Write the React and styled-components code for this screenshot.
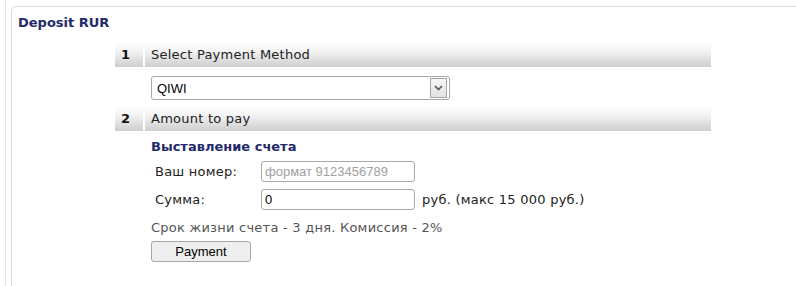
import React from 'react'
import styled, { createGlobalStyle } from 'styled-components'

const GlobalStyle = createGlobalStyle`
  html, body {
    margin: 0;
    padding: 0;
    background: #fff;
  }
  body {
    font-family: "DejaVu Sans", Verdana, sans-serif;
    font-size: 13px;
    letter-spacing: 0.24px;
    color: #222;
  }
`;

const Page = styled.div`
  margin-left: 5px;
  border-left: 1px solid #e6e6e6;
  padding-left: 5px;
  min-height: 286px;
  box-sizing: border-box;
  padding-top: 6px;
`;

const Box = styled.div`
  border-top: 1px solid #dcdcdc;
  border-left: 1px solid #dcdcdc;
  border-top-left-radius: 5px;
  min-height: 280px;
  box-sizing: border-box;
  padding: 8px 0 0 6px;
`;

const Title = styled.h2`
  margin: 0;
  font-size: 13px;
  font-weight: bold;
  color: #1f2a6b;
  line-height: 16px;
  letter-spacing: 0;
`;

const Steps = styled.div`
  margin-left: 97px;
  margin-top: 11px;
  width: 596px;
`;

const StepHead = styled.div`
  display: flex;
  gap: 2px;
  height: 25px;
`;

const headGradient = `
  background: linear-gradient(to bottom, #ffffff 0%, #f4f4f4 35%, #cecece 100%);
`;

const StepNum = styled.div`
  ${headGradient}
  width: 28px;
  padding-left: 6px;
  box-sizing: border-box;
  font-weight: bold;
  line-height: 25px;
  color: #111;
`;

const StepTitle = styled.div`
  ${headGradient}
  flex: 1;
  padding-left: 6px;
  line-height: 25px;
  color: #222;
`;

const StepBody = styled.div`
  padding: ${p => p.$pad || '0'};
  padding-left: 36px;
`;

const SelectWrap = styled.div`
  position: relative;
  width: 299px;
  height: 24px;
`;

const Select = styled.select`
  appearance: none;
  -webkit-appearance: none;
  width: 100%;
  height: 100%;
  border: 1px solid #a9a9a9;
  border-radius: 3px;
  background: #fff;
  font-family: "Liberation Sans", Arial, sans-serif;
  font-size: 13px;
  color: #000;
  padding: 0 0 0 5px;
  outline: none;
`;

const Arrow = styled.span`
  position: absolute;
  right: 3px;
  top: 2px;
  width: 15px;
  height: 18px;
  border: 1px solid #a6a6a6;
  background: linear-gradient(to bottom, #f6f6f6, #e2e2e2);
  display: flex;
  align-items: center;
  justify-content: center;
  pointer-events: none;
`;

const SubTitle = styled.div`
  font-weight: bold;
  color: #1f2a6b;
  line-height: 16px;
  margin-top: 8px;
  letter-spacing: 0;
`;

const FormGrid = styled.div`
  display: grid;
  grid-template-columns: 106px auto;
  row-gap: 7px;
  align-items: center;
  margin-top: 6px;
  padding-left: 4px;
`;

const Label = styled.label`
  color: #222;
`;

const FieldRow = styled.div`
  display: flex;
  align-items: center;
  gap: 7px;
`;

const Input = styled.input`
  width: 154px;
  height: 21px;
  box-sizing: border-box;
  border: 1px solid #a9a9a9;
  border-radius: 3px;
  font-family: "Liberation Sans", Arial, sans-serif;
  font-size: 13px;
  padding: 0 3px;
  color: #000;
  outline: none;
  &::placeholder {
    color: #a0a0a0;
  }
`;

const Note = styled.div`
  color: #555;
  margin-top: 10px;
  line-height: 16px;
`;

const Button = styled.button`
  display: block;
  margin-top: 5px;
  width: 100px;
  height: 21px;
  border: 1px solid #a6a6a6;
  border-radius: 3px;
  background: #efefef;
  font-family: "Liberation Sans", Arial, sans-serif;
  font-size: 13px;
  color: #000;
  padding: 0;
`;

export default function App() {
  return (
    <>
      <GlobalStyle />
      <Page>
        <Box>
          <Title>Deposit RUR</Title>
          <Steps>
            <StepHead>
              <StepNum>1</StepNum>
              <StepTitle>Select Payment Method</StepTitle>
            </StepHead>
            <StepBody $pad="9px 0 6px">
              <SelectWrap>
                <Select defaultValue="qiwi">
                  <option value="qiwi">QIWI</option>
                </Select>
                <Arrow>
                  <svg width="9" height="6" viewBox="0 0 9 6">
                    <path d="M1 1 L4.5 4.5 L8 1" fill="none" stroke="#555" strokeWidth="1.6" />
                  </svg>
                </Arrow>
              </SelectWrap>
            </StepBody>
            <StepHead>
              <StepNum>2</StepNum>
              <StepTitle>Amount to pay</StepTitle>
            </StepHead>
            <StepBody>
              <SubTitle>Выставление счета</SubTitle>
              <FormGrid>
                <Label>Ваш номер:</Label>
                <FieldRow>
                  <Input placeholder="формат 9123456789" />
                </FieldRow>
                <Label>Сумма:</Label>
                <FieldRow>
                  <Input defaultValue="0" />
                  <span>руб. (макс 15 000 руб.)</span>
                </FieldRow>
              </FormGrid>
              <Note>Срок жизни счета - 3 дня. Комиссия - 2%</Note>
              <Button>Payment</Button>
            </StepBody>
          </Steps>
        </Box>
      </Page>
    </>
  )
}
